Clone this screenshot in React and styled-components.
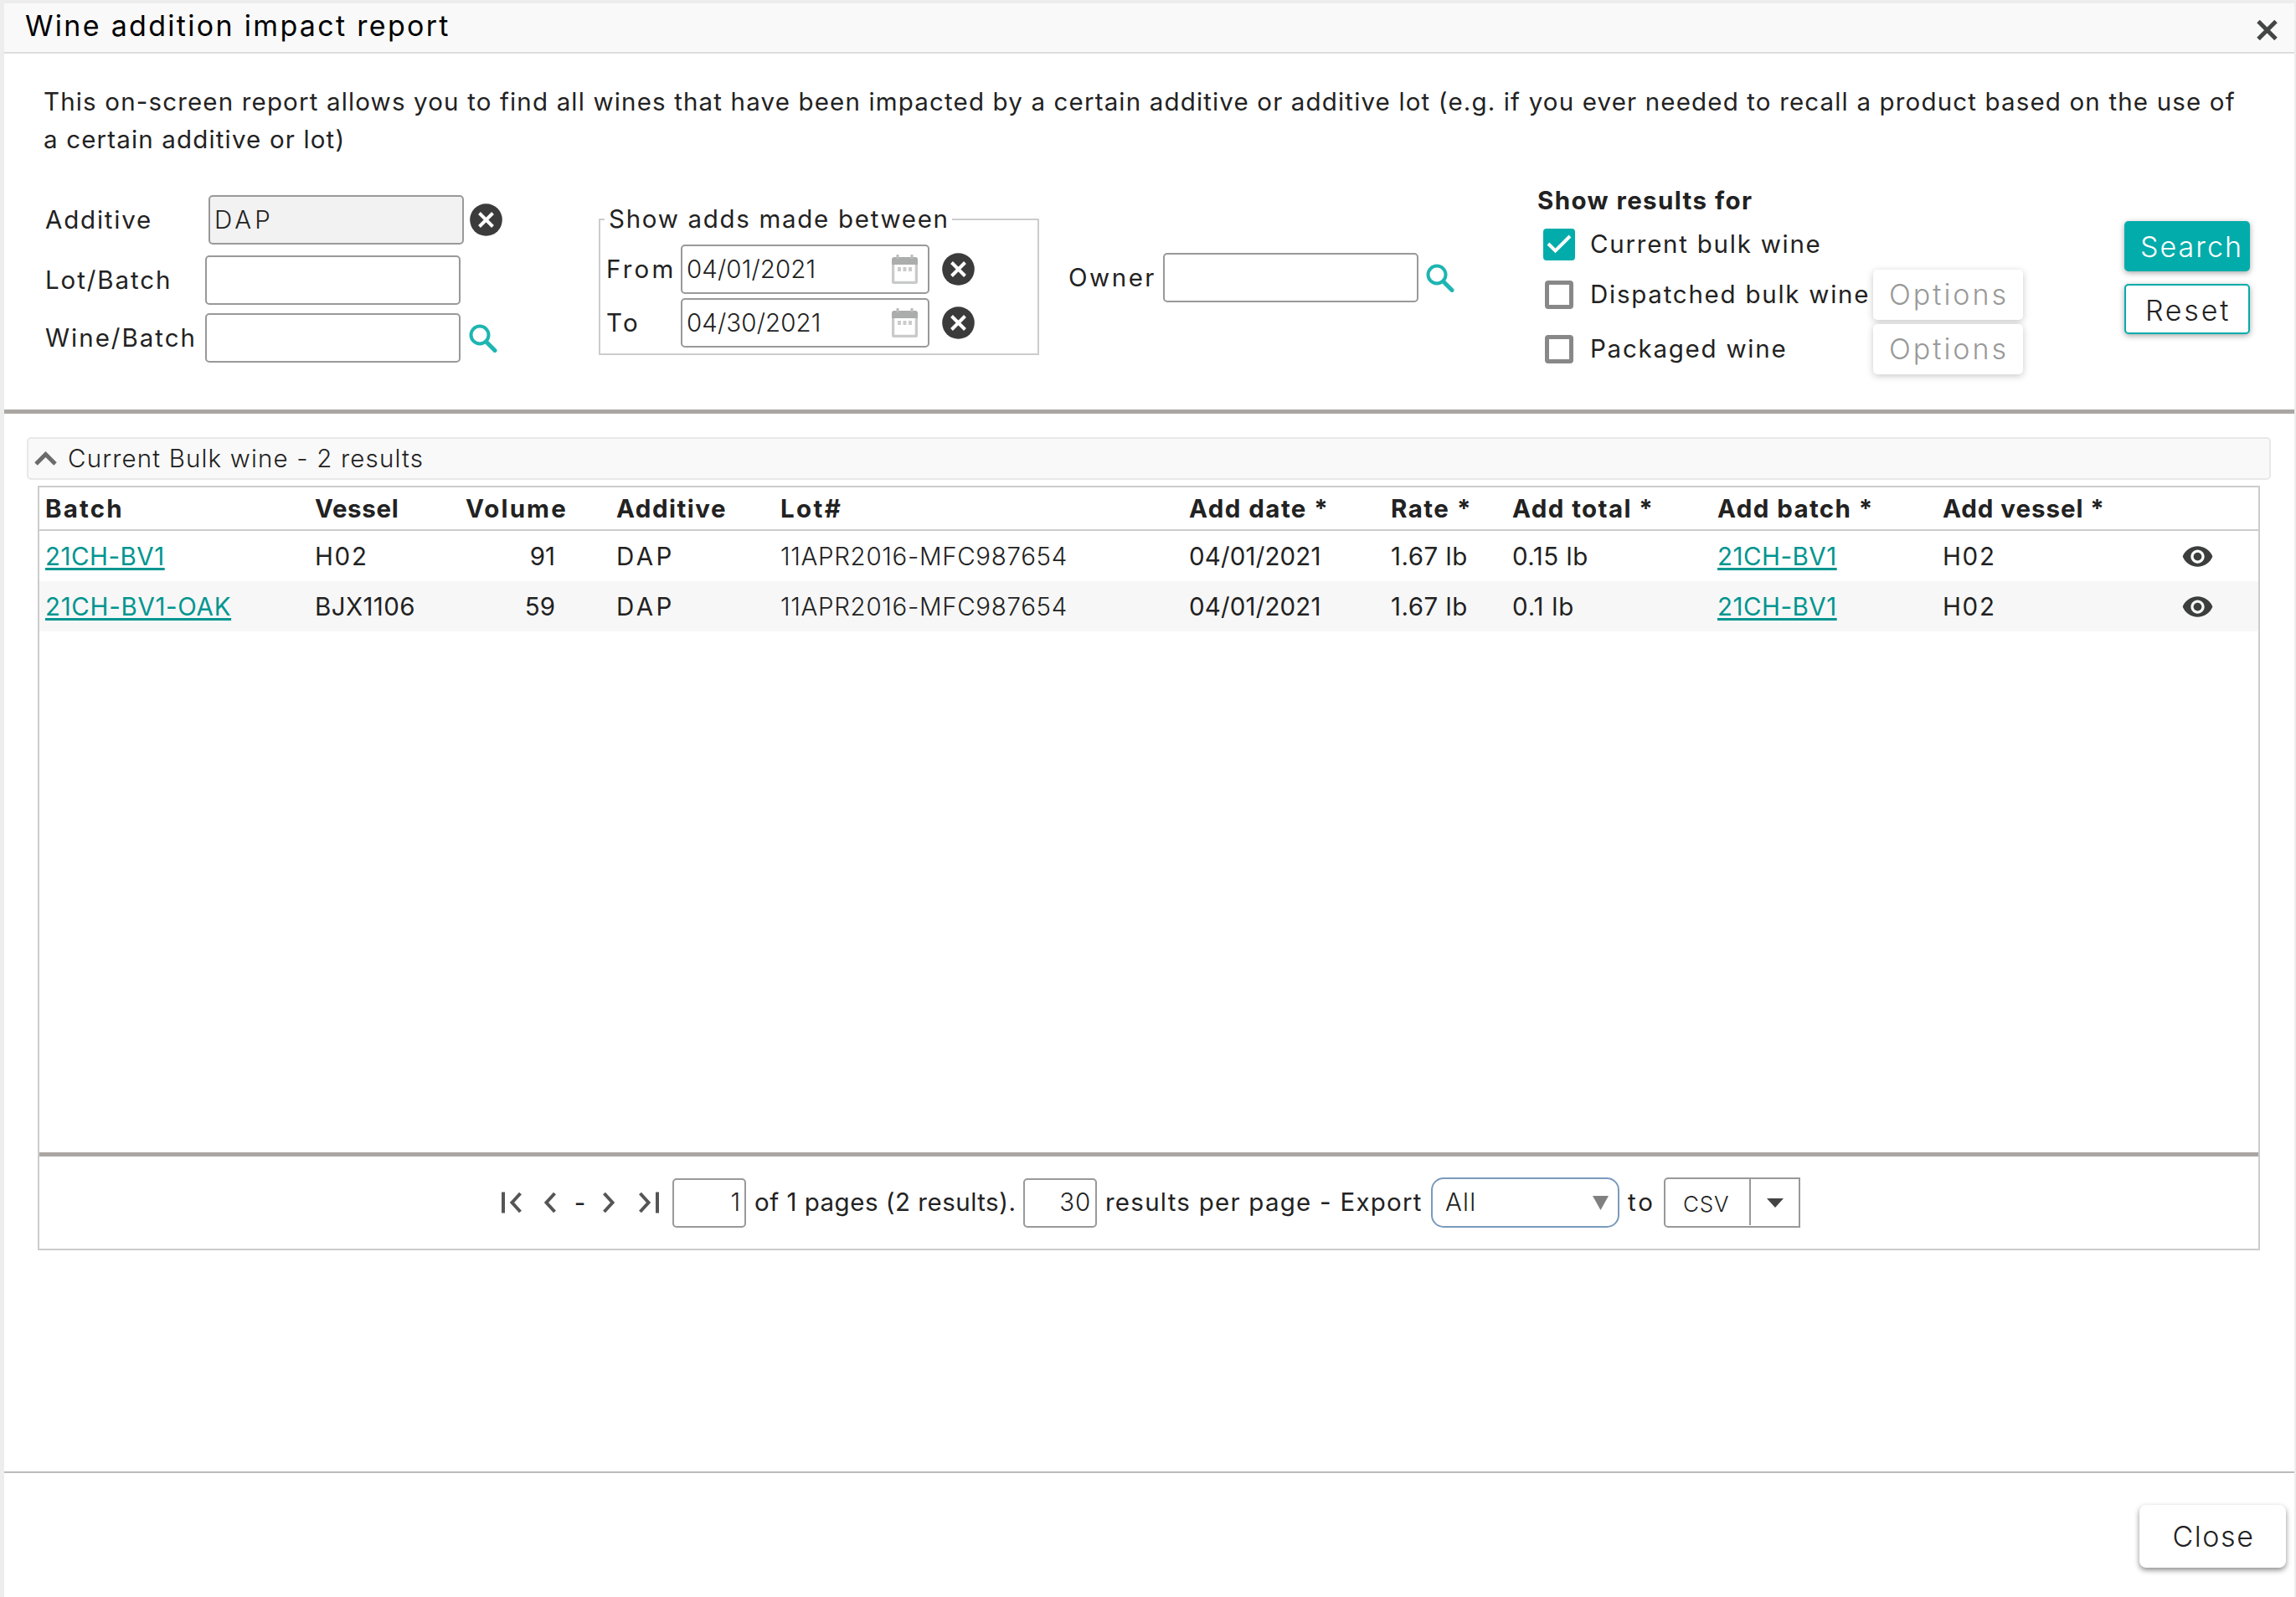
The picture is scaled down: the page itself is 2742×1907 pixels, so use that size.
import React from 'react';
import styled, { createGlobalStyle, css } from 'styled-components';
import { MdVisibility } from 'react-icons/md';

const GlobalStyle = createGlobalStyle`
    * {
        box-sizing: border-box;
    }
    body {
        margin: 0;
        background: #ededed;
        color: #222;
        font-family: Inter, "Open Sans", sans-serif;
        font-size: 29.5px;
    }
`
const Dialog = styled.div`
    display: flex;
    flex-direction: column;
    height: 1907px;
    padding: 4px 2px 0 5px;
`
const Header = styled.header`
    display: flex;
    justify-content: space-between;
    align-items: center;
    height: 60px;
    padding: 0 20px 0 25px;
    background: #f9f9f9;
    border-bottom: 2px solid #ddd;

    svg {
        margin-top: 6px;
    }
`
const Title = styled.h1`
    margin: 0;
    padding-bottom: 4px;
    color: #000;
    font-size: 34px;
    font-weight: 400;
    line-height: 50px;
    letter-spacing: 2.3px;
`
const Content = styled.main`
    flex: 1;
    background: #fff;
`
const Description = styled.p`
    margin: 0;
    padding: 35px 54px 0 47px;
    line-height: 45px;
    letter-spacing: 1.16px;
`
const Filters = styled.section`
    display: grid;
    grid-template-columns: 661px 561px 560px 701px 150px;
    height: 305px;
    padding-left: 49px;
    border-bottom: 5px solid #aaa6a3;
`
const Text = styled.span`
    flex: none;
    width: ${p => p.$w ? `${p.$w}px` : 'auto'};
    margin-left: ${p => p.$ml || 0}px;
    font-weight: ${p => p.$light ? 300 : p.$bold ? 700 : 400};
    letter-spacing: ${p => p.$ls || 0}px;
    white-space: nowrap;
`
const FieldList = styled.div`
    padding-top: 44px;
`
const Field = styled.div`
    display: flex;
    align-items: center;
    height: 59px;
    margin-bottom: ${p => p.$gap || 0}px;

    svg {
        flex: none;
    }
    ${Text} {
        padding-bottom: 2px;
    }
`
const Input = styled.div`
    display: flex;
    flex: none;
    align-items: center;
    justify-content: ${p => p.$right ? 'flex-end' : 'space-between'};
    width: ${p => p.$w || 305}px;
    height: 59px;
    margin-right: ${p => p.$mr || 0}px;
    padding: 0 ${p => p.$right ? 5 : 12}px 0 5px;
    background: ${p => p.$disabled ? '#f2f2f2' : '#fff'};
    border: 2px solid #999;
    border-radius: 5px;
`
const DateRange = styled.fieldset`
    width: 526px;
    height: 180px;
    margin: 55px 0 0;
    padding: 12px 0 0 7px;
    border: 2px solid #ccc;
`
const Legend = styled.legend`
    width: 415px;
    margin-left: -2px;
    padding: 0 0 2px 5px;
    line-height: 34px;
`
const OwnerField = styled.div`
    padding-top: 113px;
`
const ResultTypes = styled.div`
    width: 580px;
    padding-top: 32px;
`
const GroupTitle = styled.div`
    margin-bottom: 5px;
    line-height: 36px;
`
const CheckRow = styled.div`
    display: flex;
    align-items: center;
    height: 60px;
    margin-bottom: ${p => p.$gap || 0}px;
    padding-left: 7px;

    ${Text} {
        padding-bottom: 2px;
    }
`
const Checkbox = styled.span`
    display: flex;
    flex: none;
    align-items: center;
    justify-content: center;
    width: 34px;
    height: 34px;
    margin: 0 20px 0 2px;
    border: 5px solid #888;
    border-radius: 4px;

    ${p => p.$checked && css`
        width: 38px;
        height: 38px;
        margin: 0 18px 0 0;
        background: #02acaa;
        border: 0;
    `}
`
const Button = styled.button`
    flex: none;
    width: 150px;
    height: 60px;
    margin: 0;
    padding: 0;
    border: 0;
    border-radius: 5px;
    background: #fff;
    color: #222;
    font-family: inherit;
    font-size: 34px;
    font-weight: 300;
    box-shadow: 0 2px 7px rgba(0, 0, 0, 0.35);
`
const OptionsButton = styled(Button)`
    width: 179px;
    margin-left: auto;
    padding: 0 0 2px 2px;
    color: #999;
    letter-spacing: 3px;
    box-shadow: 0 2px 8px rgba(0, 0, 0, 0.22);
`
const SearchButton = styled(Button)`
    padding-left: 11px;
    background: #02acaa;
    color: #fff;
    letter-spacing: 2px;
`
const ResetButton = styled(Button)`
    padding: 2px 0 0 2px;
    border: 2px solid #02acaa;
    letter-spacing: 2.8px;
`
const Actions = styled.div`
    display: flex;
    flex-direction: column;
    gap: 15px;
    padding-top: 75px;
`
const PanelHeader = styled.div`
    display: flex;
    align-items: center;
    height: 51px;
    margin: 28px 28px 7px 27px;
    padding-left: 7px;
    background: #f9f9f9;
    border: 2px solid #e8e8e8;
    border-radius: 5px;

    ${Text} {
        padding-bottom: 1px;
    }
`
const Table = styled.div`
    margin: 0 41px 0 40px;
    border: 2px solid #ccc;
`
const Row = styled.div`
    display: grid;
    grid-template-columns: 322px 180px 180px 196px 488px 241px 145px 245px 269px 1fr;
    align-items: center;
    height: ${p => p.$head ? 52 : 60}px;
    padding-left: 7px;
    border-bottom: ${p => p.$head ? '2px solid #ccc' : 0};
    background: ${p => p.$striped ? '#f7f7f7' : '#fff'};
`
const Cell = styled.div`
    display: flex;
    align-items: center;
    justify-content: ${p => p.$right ? 'flex-end' : 'flex-start'};
    padding-right: ${p => p.$right ? 73 : 0}px;
`
const Link = styled.a`
    color: #009590;
    letter-spacing: ${p => p.$ls}px;
    text-decoration: underline;
    text-decoration-thickness: 3px;
    text-underline-offset: 3px;
    text-decoration-skip-ink: none;
`
const VesselCell = styled(Cell)`
    justify-content: space-between;
    padding-right: 53px;
`
const TableBody = styled.div`
    height: 742px;
`
const Pager = styled.div`
    display: flex;
    align-items: center;
    height: 115px;
    padding-left: 543px;
    border-top: 5px solid #aaa6a3;

    ${Text} {
        padding-bottom: 2px;
    }
`
const PagerSlot = styled.span`
    display: flex;
    flex: none;
    justify-content: center;
    width: ${p => p.$w}px;
    margin-right: ${p => p.$mr || 0}px;
`
const Select = styled.div`
    display: flex;
    flex: none;
    align-items: center;
    justify-content: space-between;
    width: 225px;
    height: 60px;
    padding: 0 11px 0 15px;
    border: 2px solid #7a9abc;
    border-radius: 15px;
`
const ExportButton = styled.div`
    display: flex;
    flex: none;
    width: 163px;
    height: 60px;
    border: 2px solid #999;
    border-radius: 5px 0 0 5px;
    font-size: 26px;
`
const ExportFormat = styled.div`
    display: flex;
    align-items: center;
    width: 102px;
    height: 55px;
    padding: 5px 0 0 21px;
    border-right: 2px solid #999;
`
const ExportToggle = styled.div`
    display: flex;
    flex: 1;
    align-items: center;
    justify-content: center;
`
const Footer = styled.footer`
    display: flex;
    justify-content: flex-end;
    height: 150px;
    padding: 38px 10px 0 0;
    background: #fff;
    border-top: 2px solid #bbb;
`
const CloseButton = styled(Button)`
    width: 175px;
    height: 75px;
    padding-left: 2px;
    border-radius: 8px;
    letter-spacing: 1.6px;
    box-shadow: 0 3px 6px rgba(0, 0, 0, 0.45);
`

const ClearIcon = () => (
    <svg width="39" height="39" viewBox="0 0 39 39">
        <circle cx="19.5" cy="19.5" r="19.3" fill="#3a3b3a" />
        <path d="M11.5 11.5 L27.5 27.5 M27.5 11.5 L11.5 27.5" stroke="#fff" strokeWidth="4" />
    </svg>
)

const SearchIcon = () => (
    <svg width="34" height="34" viewBox="0 0 34 34" fill="none" stroke="#1eb5b2">
        <circle cx="13" cy="13" r="10.5" strokeWidth="4" />
        <path d="M20.5 21 L31 31.5" strokeWidth="5" strokeLinecap="round" />
    </svg>
)

const CalendarIcon = () => (
    <svg width="31" height="35" viewBox="0 0 31 35">
        <rect x="1.5" y="6" width="28" height="27.5" rx="2" fill="#fff" stroke="#c9cbca" strokeWidth="3.5" />
        <path d="M0 6 Q0 3 3 3 H28 Q31 3 31 6 V12 H0 Z" fill="#abadac" />
        <path d="M7 0 V5 M24 0 V5" stroke="#bbb" strokeWidth="3" />
        <path d="M7 17.5 H11 M13.5 17.5 H17.5 M20 17.5 H24" stroke="#ccc" strokeWidth="5" />
    </svg>
)

const Chevron = ({ flip, bar }) => (
    <svg width={bar ? 24 : 14} height="26" viewBox={bar ? '0 0 24 26' : '10 0 14 26'} fill="none" stroke="#555" strokeWidth="4" transform={flip ? 'scale(-1 1)' : undefined}>
        {bar && <path d="M2 0.5 V25.5" />}
        <path d="M22.5 2 L12.5 13 L22.5 24" />
    </svg>
)

const columns = [
    ['Batch', 2.2], ['Vessel', 0.66], ['Volume', 2.11], ['Additive', 1.5], ['Lot#', 2.4],
    ['Add date *', 1.44], ['Rate *', 1.5], ['Add total *', 1.41], ['Add batch *', 1.4], ['Add vessel *', 0.95],
]

const results = [
    { batch: '21CH-BV1', batchLs: 0.5, vessel: 'H02', vesselLs: 1.7, volume: '91', total: '0.15 lb', totalLs: 0.5 },
    { batch: '21CH-BV1-OAK', batchLs: 0.68, vessel: 'BJX1106', vesselLs: 0.4, volume: '59', total: '0.1 lb', totalLs: 0.8 },
]

const App = () => {
    return (
        <>
            <GlobalStyle />
            <Dialog>
                <Header>
                    <Title>Wine addition impact report</Title>
                    <svg width="25" height="26" viewBox="0 0 25 26" stroke="#444645" strokeWidth="5">
                        <path d="M2 2.5 L23 23.5 M23 2.5 L2 23.5" />
                    </svg>
                </Header>
                <Content>
                    <Description>
                        This on-screen report allows you to find all wines that have been impacted by a certain additive or additive lot (e.g. if you ever needed to recall a product based on the use of a certain additive or lot)
                    </Description>
                    <Filters>
                        <FieldList>
                            <Field $gap={13}>
                                <Text $w={195} $ls={1.8}>Additive</Text>
                                <Input $disabled $mr={7}><Text $light $ls={4}>DAP</Text></Input>
                                <ClearIcon />
                            </Field>
                            <Field $gap={10}>
                                <Text $w={191} $ls={1.9}>Lot/Batch</Text>
                                <Input />
                            </Field>
                            <Field>
                                <Text $w={191} $ls={2}>Wine/Batch</Text>
                                <Input $mr={10} />
                                <SearchIcon />
                            </Field>
                        </FieldList>
                        <div>
                            <DateRange>
                                <Legend><Text $ls={1.7}>Show adds made between</Text></Legend>
                                <Field $gap={5}>
                                    <Text $w={89} $ls={3.2}>From</Text>
                                    <Input $w={297} $mr={15}><Text $light $ls={0.1}>04/01/2021</Text><CalendarIcon /></Input>
                                    <ClearIcon />
                                </Field>
                                <Field>
                                    <Text $w={89} $ls={3.2}>To</Text>
                                    <Input $w={297} $mr={15}><Text $light $ls={0.1}>04/30/2021</Text><CalendarIcon /></Input>
                                    <ClearIcon />
                                </Field>
                            </DateRange>
                        </div>
                        <OwnerField>
                            <Field>
                                <Text $w={113} $ls={2.5}>Owner</Text>
                                <Input $mr={9} />
                                <SearchIcon />
                            </Field>
                        </OwnerField>
                        <ResultTypes>
                            <GroupTitle><Text $bold $ls={1.4}>Show results for</Text></GroupTitle>
                            <CheckRow>
                                <Checkbox $checked>
                                    <svg width="30" height="24" viewBox="0 0 30 24" fill="none" stroke="#fff" strokeWidth="4">
                                        <path d="M2 11 L10.5 19.5 L28 2" />
                                    </svg>
                                </Checkbox>
                                <Text $ls={1.75}>Current bulk wine</Text>
                            </CheckRow>
                            <CheckRow $gap={5}>
                                <Checkbox />
                                <Text $ls={1.75}>Dispatched bulk wine</Text>
                                <OptionsButton>Options</OptionsButton>
                            </CheckRow>
                            <CheckRow>
                                <Checkbox />
                                <Text $ls={1.75}>Packaged wine</Text>
                                <OptionsButton>Options</OptionsButton>
                            </CheckRow>
                        </ResultTypes>
                        <Actions>
                            <SearchButton>Search</SearchButton>
                            <ResetButton>Reset</ResetButton>
                        </Actions>
                    </Filters>
                    <PanelHeader>
                        <svg width="27" height="17" viewBox="0 0 27 17" fill="none" stroke="#6b6b6b" strokeWidth="5">
                            <path d="M2 15 L13.5 3.5 L25 15" />
                        </svg>
                        <Text $light $ml={13} $ls={1.16}>Current Bulk wine - 2 results</Text>
                    </PanelHeader>
                    <Table>
                        <Row $head>
                            {columns.map(([name, ls]) => (
                                <Cell key={name}><Text $bold $ls={ls}>{name}</Text></Cell>
                            ))}
                        </Row>
                        <TableBody>
                            {results.map((r, i) => (
                                <Row key={r.batch} $striped={i % 2 === 1}>
                                    <Cell><Link $ls={r.batchLs}>{r.batch}</Link></Cell>
                                    <Cell><Text $ls={r.vesselLs}>{r.vessel}</Text></Cell>
                                    <Cell $right><Text>{r.volume}</Text></Cell>
                                    <Cell><Text $ls={3.4}>DAP</Text></Cell>
                                    <Cell><Text $light $ls={0.66}>11APR2016-MFC987654</Text></Cell>
                                    <Cell><Text $ls={0.15}>04/01/2021</Text></Cell>
                                    <Cell><Text $ls={0.5}>1.67 lb</Text></Cell>
                                    <Cell><Text $ls={r.totalLs}>{r.total}</Text></Cell>
                                    <Cell><Link $ls={0.5}>21CH-BV1</Link></Cell>
                                    <VesselCell>
                                        <Text $ls={1.7}>H02</Text>
                                        <MdVisibility size={39} color="#3c3e3d" />
                                    </VesselCell>
                                </Row>
                            ))}
                        </TableBody>
                        <Pager>
                            <PagerSlot $w={41}><Chevron bar /></PagerSlot>
                            <PagerSlot $w={52}><Chevron /></PagerSlot>
                            <PagerSlot $w={19}>-</PagerSlot>
                            <PagerSlot $w={50}><Chevron flip /></PagerSlot>
                            <PagerSlot $w={45} $mr={6}><Chevron bar flip /></PagerSlot>
                            <Input $w={88} $right><Text $light>1</Text></Input>
                            <Text $ml={10} $w={321} $ls={0.5}>of 1 pages (2 results).</Text>
                            <Input $w={88} $right><Text $light $ls={0.8}>30</Text></Input>
                            <Text $ml={10} $w={389} $ls={1.25}>results per page - Export</Text>
                            <Select>
                                <Text $light $ls={1.25}>All</Text>
                                <svg width="19" height="17" viewBox="0 0 19 17" fill="#808080"><path d="M0 0 H19 L9.5 17 Z" /></svg>
                            </Select>
                            <Text $ml={10} $w={43} $ls={3}>to</Text>
                            <ExportButton>
                                <ExportFormat><Text $light $ls={0.8}>CSV</Text></ExportFormat>
                                <ExportToggle>
                                    <svg width="20" height="11" viewBox="0 0 20 11" fill="#444"><path d="M0 0 H20 L10 11 Z" /></svg>
                                </ExportToggle>
                            </ExportButton>
                        </Pager>
                    </Table>
                </Content>
                <Footer>
                    <CloseButton>Close</CloseButton>
                </Footer>
            </Dialog>
        </>
    )
}

export default App;
